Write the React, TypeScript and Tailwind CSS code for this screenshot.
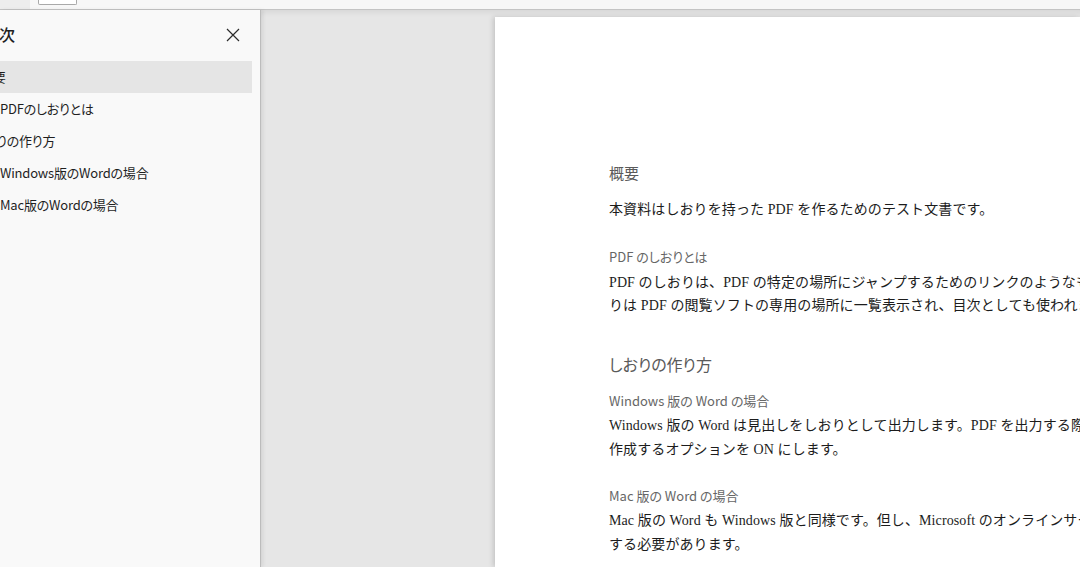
import React from "react";

const sans = "font-['Noto_Sans_CJK_JP','Noto_Sans',sans-serif] [font-feature-settings:'palt']";
const serif = "font-['Liberation_Serif','Noto_Sans_CJK_JP',serif]";

function CloseIcon() {
  return (
    <svg width="14" height="14" viewBox="0 0 14 14" fill="none" stroke="#2b2b2b" strokeWidth="1.2">
      <path d="M1 1 L13 13 M13 1 L1 13" />
    </svg>
  );
}

const items = [
  { label: "概要", pad: "pl-[28px]", selected: true },
  { label: "PDFのしおりとは", pad: "pl-[48px]" },
  { label: "しおりの作り方", pad: "pl-[21px]" },
  { label: "Windows版のWordの場合", pad: "pl-[48px]" },
  { label: "Mac版のWordの場合", pad: "pl-[48px]" },
];

export default function App() {
  return (
    <div className="w-[1080px] h-[567px] overflow-hidden flex flex-col bg-[#e6e6e6]">
      {/* top toolbar strip */}
      <div className="h-[10px] shrink-0 bg-[#f7f7f7] border-b border-[#c4c4c4] flex items-start">
        <div className="w-[30px] h-[9px] bg-[#ededed]" />
        <div className="ml-[8px] w-[39px] h-[5px] bg-white border border-t-0 border-[#a9a9a9] rounded-b-[2px]" />
      </div>
      <div className="flex flex-1 min-h-0">
        {/* sidebar */}
        <div className={`w-[261px] shrink-0 bg-[#f9f9f9] border-r border-[#bcbcbc] overflow-hidden relative z-10 shadow-[2px_0_4px_rgba(0,0,0,0.08)] ${sans}`}>
          <div className="h-[48px] flex items-center justify-between pr-[20px]">
            <div className="ml-[-17px] text-[16px] font-medium text-[#1f1f1f] whitespace-nowrap">目次</div>
            <div className="mt-[2px]"><CloseIcon /></div>
          </div>
          <div className="mt-[3px] ml-[-48px] mr-[8px]">
            {items.map((it) => (
              <div
                key={it.label}
                className={`h-[32px] flex items-center text-[13px] tracking-[-0.2px] text-[#1f1f1f] whitespace-nowrap ${it.selected ? "bg-[#e5e5e5]" : ""} ${it.pad}`}
              >
                {it.label}
              </div>
            ))}
          </div>
        </div>
        {/* main view */}
        <div className="flex-1 min-w-0 flex pl-[234px] pt-[7px] shadow-[inset_0_6px_6px_-4px_rgba(0,0,0,0.08)]">
          <div className="flex-1 bg-white shadow-[-2px_0_5px_rgba(0,0,0,0.15)] pl-[114px] pt-[144px] overflow-hidden">
            <div className={`${sans} text-[15px] leading-[24px] text-[#5a5a5a] whitespace-nowrap`}>概要</div>
            <div className={`${serif} mt-[13px] text-[14px] tracking-[0.1px] leading-[24px] text-[#1c1c1c] whitespace-nowrap`}>
              本資料はしおりを持った PDF を作るためのテスト文書です。
            </div>
            <div className={`${sans} mt-[23px] text-[13px] leading-[24px] text-[#666] whitespace-nowrap`}>PDF のしおりとは</div>
            <div className={`${serif} mt-[2px] text-[14px] tracking-[0.1px] leading-[23px] text-[#1c1c1c] whitespace-nowrap`}>
              <div>PDF のしおりは、PDF の特定の場所にジャンプするためのリンクのようなものです。しお</div>
              <div>りは PDF の閲覧ソフトの専用の場所に一覧表示され、目次としても使われます。</div>
            </div>
            <div className={`${sans} mt-[35px] text-[16px] leading-[24px] text-[#5a5a5a] whitespace-nowrap`}>しおりの作り方</div>
            <div className={`${sans} mt-[13px] text-[13px] leading-[24px] text-[#666] whitespace-nowrap`}>Windows 版の Word の場合</div>
            <div className={`${serif} mt-[1px] text-[14px] tracking-[0.1px] leading-[24px] text-[#1c1c1c] whitespace-nowrap`}>
              <div>Windows 版の Word は見出しをしおりとして出力します。PDF を出力する際に、しおりを</div>
              <div>作成するオプションを ON にします。</div>
            </div>
            <div className={`${sans} mt-[22px] text-[13px] leading-[24px] text-[#666] whitespace-nowrap`}>Mac 版の Word の場合</div>
            <div className={`${serif} mt-[1px] text-[14px] tracking-[0.1px] leading-[24px] text-[#1c1c1c] whitespace-nowrap`}>
              <div>Mac 版の Word も Windows 版と同様です。但し、Microsoft のオンラインサービスを利用</div>
              <div>する必要があります。</div>
            </div>
          </div>
        </div>
      </div>
    </div>
  );
}
